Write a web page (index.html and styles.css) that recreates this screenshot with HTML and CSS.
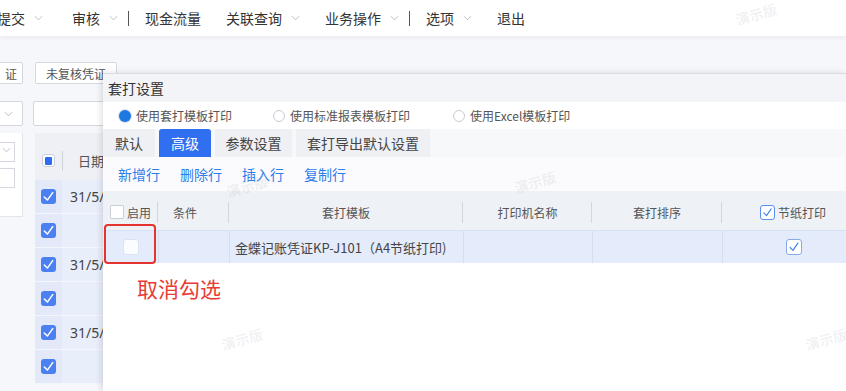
FILE: index.html
```html
<!DOCTYPE html>
<html lang="zh">
<head>
<meta charset="utf-8">
<title>套打设置</title>
<link rel="stylesheet" href="styles.css">
</head>
<body>
<header class="topnav">
  <span class="nav-item first">提交<svg class="chev" viewBox="0 0 10 6"><polyline points="1,1 5,5 9,1"/></svg></span>
  <span class="nav-item">审核<svg class="chev" viewBox="0 0 10 6"><polyline points="1,1 5,5 9,1"/></svg></span>
  <span class="nav-sep"></span>
  <span class="nav-item">现金流量</span>
  <span class="nav-item">关联查询<svg class="chev" viewBox="0 0 10 6"><polyline points="1,1 5,5 9,1"/></svg></span>
  <span class="nav-item">业务操作<svg class="chev" viewBox="0 0 10 6"><polyline points="1,1 5,5 9,1"/></svg></span>
  <span class="nav-sep"></span>
  <span class="nav-item">选项<svg class="chev" viewBox="0 0 10 6"><polyline points="1,1 5,5 9,1"/></svg></span>
  <span class="nav-item">退出</span>
</header>

<main class="page">
  <div class="toolbar">
    <span class="btn btn-cut">证</span>
    <span class="btn">未复核凭证</span>
  </div>
  <div class="filters">
    <span class="select"><svg class="chev" viewBox="0 0 10 6"><polyline points="1,1 5,5 9,1"/></svg></span>
    <span class="input"></span>
  </div>
  <div class="content">
    <aside class="side">
      <span class="mini"><svg class="chev small" viewBox="0 0 10 6"><polyline points="1,1 5,5 9,1"/></svg></span>
      <span class="mini"></span>
    </aside>
    <section class="grid">
      <div class="grid-head">
        <span class="hc-cb"><span class="cb cb-part"></span></span>
        <span class="hc-line"></span>
        <span class="hc-date">日期</span>
      </div>
      <div class="grid-row"><span class="cb-col"><span class="cb cb-on"><svg viewBox="0 0 16 16"><polyline points="3.5,8.5 6.8,11.8 12.5,3.8"/></svg></span></span><span class="date">31/5/2024</span></div>
      <div class="grid-row"><span class="cb-col"><span class="cb cb-on"><svg viewBox="0 0 16 16"><polyline points="3.5,8.5 6.8,11.8 12.5,3.8"/></svg></span></span><span class="date"></span></div>
      <div class="grid-row"><span class="cb-col"><span class="cb cb-on"><svg viewBox="0 0 16 16"><polyline points="3.5,8.5 6.8,11.8 12.5,3.8"/></svg></span></span><span class="date">31/5/2024</span></div>
      <div class="grid-row"><span class="cb-col"><span class="cb cb-on"><svg viewBox="0 0 16 16"><polyline points="3.5,8.5 6.8,11.8 12.5,3.8"/></svg></span></span><span class="date"></span></div>
      <div class="grid-row"><span class="cb-col"><span class="cb cb-on"><svg viewBox="0 0 16 16"><polyline points="3.5,8.5 6.8,11.8 12.5,3.8"/></svg></span></span><span class="date">31/5/2024</span></div>
      <div class="grid-row"><span class="cb-col"><span class="cb cb-on"><svg viewBox="0 0 16 16"><polyline points="3.5,8.5 6.8,11.8 12.5,3.8"/></svg></span></span><span class="date"></span></div>
    </section>
  </div>
</main>

<div class="dialog">
  <div class="dlg-title">套打设置</div>
  <div class="radios">
    <label class="radio r1"><span class="dot on"></span>使用套打模板打印</label>
    <label class="radio r2"><span class="dot"></span>使用标准报表模板打印</label>
    <label class="radio r3"><span class="dot"></span>使用Excel模板打印</label>
  </div>
  <div class="tabs">
    <span class="tab t1">默认</span>
    <span class="tab t2 active">高级</span>
    <span class="tab t3">参数设置</span>
    <span class="tab t4">套打导出默认设置</span>
  </div>
  <div class="actions">
    <span class="act">新增行</span>
    <span class="act">删除行</span>
    <span class="act">插入行</span>
    <span class="act">复制行</span>
  </div>
  <div class="tbl">
    <div class="thead">
      <span class="c c1"><span class="hcb"></span>启用<i class="hsep"></i></span>
      <span class="c c2 left">条件<i class="hsep"></i></span>
      <span class="c c3">套打模板<i class="hsep"></i></span>
      <span class="c c4">打印机名称<i class="hsep"></i></span>
      <span class="c c5">套打排序<i class="hsep"></i></span>
      <span class="c c6"><span class="hcb checked"><svg viewBox="0 0 16 16"><polyline points="3.5,8.5 6.8,11.8 12.5,3.5"/></svg></span>节纸打印</span>
    </div>
    <div class="trow">
      <span class="c c1"><span class="rcb"></span></span>
      <span class="c c2 bl"></span>
      <span class="c c3 left bl">金蝶记账凭证KP-J101（A4节纸打印)</span>
      <span class="c c4 bl"></span>
      <span class="c c5 bl"></span>
      <span class="c c6 bl"><span class="rcb checked"><svg viewBox="0 0 16 16"><polyline points="3.5,8.5 6.8,11.8 12.5,3.5"/></svg></span></span>
    </div>
  </div>
</div>

<div class="annot-box"></div>
<div class="annot-text">取消勾选</div>

<span class="wm w1">演示版</span>
<span class="wm w2">演示版</span>
<span class="wm w3">演示版</span>
<span class="wm w4">演示版</span>
<span class="wm w5">演示版</span>
</body>
</html>
```

FILE: styles.css
```css
* { box-sizing: border-box; }
html, body { margin: 0; padding: 0; }
body {
  width: 846px;
  height: 391px;
  overflow: hidden;
  position: relative;
  font-family: "Noto Sans CJK SC", "Noto Sans", sans-serif;
  color: #333;
  background: #f6f7fa;
}

/* top nav */
.topnav {
  height: 36px;
  background: #fff;
  display: flex;
  align-items: center;
  font-size: 14px;
  color: #333;
  box-shadow: 0 2px 4px rgba(0,0,0,0.05);
  position: relative;
  z-index: 1;
  white-space: nowrap;
}
.nav-item { display: inline-flex; align-items: center; margin-right: 25px; line-height: 20px; }
.nav-item.first { margin-left: -3px; margin-right: 29px; }
.nav-sep { width: 1px; height: 15px; background: #555; margin-left: -15px; margin-right: 16px; flex: none; }
.chev { width: 9px; height: 6px; margin-left: 9px; fill: none; stroke: #b4b8c0; stroke-width: 1; }
.chev.small { margin: 0; }

/* page */
.page { padding-top: 26px; height: 355px; overflow: hidden; }
.toolbar { display: flex; gap: 12px; height: 22px; margin-left: -10px; }
.btn {
  display: inline-flex; align-items: center; height: 22px;
  border: 1px solid #d4d7de; border-radius: 2px; background: #fff;
  font-size: 12px; color: #555; padding: 0 10px;
}
.btn-cut { width: 33px; padding: 0 0 0 14px; }
.filters { display: flex; gap: 10px; height: 25px; margin-top: 17px; margin-left: -10px; }
.select {
  width: 33px; height: 25px; background: #fff; border: 1px solid #d4d7de; border-radius: 2px;
  display: inline-flex; align-items: center; justify-content: flex-end; padding-right: 9px;
}
.select .chev { margin: 0; }
.input { width: 160px; height: 25px; background: #fff; border: 1px solid #d4d7de; border-radius: 2px; }

.content { display: flex; margin-top: 7px; }
.side {
  width: 23px; height: 84px; background: #fff; border-right: 1px solid #e3e5ea;
  border-bottom: 1px solid #e3e5ea;
  display: flex; flex-direction: column; gap: 6px; padding-top: 9px;
  align-self: flex-start; flex: none;
}
.mini {
  width: 15px; height: 20px; background: #fff; border: 1px solid #d4d7de; border-left: none;
  display: flex; align-items: flex-start; justify-content: flex-end; padding: 4px 3px 0 0;
}
.grid { margin-left: 12px; width: 160px; flex: none; }
.grid-head {
  height: 47px; background: #eef0f5;
  display: grid; grid-template-columns: 27px 1px 132px; align-items: center;
  padding-top: 8px; font-size: 13px; color: #555;
}
.hc-cb { display: flex; justify-content: center; }
.hc-line { height: 20px; background: #cfd3db; }
.hc-date { padding-left: 15px; white-space: nowrap; line-height: 20px; }
.cb-col { width: 27px; display: flex; justify-content: center; flex: none; }
.grid-row {
  height: 34px; display: flex; align-items: center;
  background: #e9eefb; border-bottom: 1px solid #f4f6fd;
}
.grid-row .cb-col { height: 100%; align-items: center; background: #e3e9f8; }
.date { margin-left: 8px; font-size: 14px; color: #444; font-family: "Noto Sans", sans-serif; white-space: nowrap; }
.cb {
  width: 15px; height: 15px; border-radius: 3px; display: inline-flex;
  align-items: center; justify-content: center; flex: none;
}
.cb-part { width: 13px; height: 13px; border: 1px solid #c9cfdc; background: #fff; padding: 2px; }
.cb-part::after { content: ""; width: 8px; height: 8px; background: #2d6bf0; border-radius: 1px; }
.cb-on { background: #4b80f3; }
.cb-on svg { width: 15px; height: 15px; fill: none; stroke: #fff; stroke-width: 1.6; stroke-linecap: round; stroke-linejoin: round; }

/* dialog */
.dialog {
  position: absolute; left: 103px; top: 73px; right: 0; bottom: 0;
  background: #fff; border-top: 1px solid #d8dbe2;
  box-shadow: -2px 0 6px rgba(0,0,0,0.12);
  z-index: 2;
  display: flex; flex-direction: column;
}
.dlg-title {
  height: 28px; background: #f2f4f8; font-size: 14px; color: #333;
  display: flex; align-items: center; padding-left: 5px;
}
.radios { height: 27px; background: #fff; display: flex; align-items: center; padding-left: 16px; font-size: 12px; color: #555; }
.radio { display: inline-flex; align-items: center; }
.r1 { width: 154px; }
.r2 { width: 180px; }
.dot {
  width: 12px; height: 12px; border-radius: 50%; border: 1px solid #c6cad3; background: #fff;
  margin-right: 5px; flex: none;
}
.dot.on { border: none; background: #1f78e0; box-shadow: 0 0 0 1px #d5e3f7; }
.tabs { height: 28px; background: #f7f8fa; display: flex; gap: 4px; }
.tab {
  display: flex; align-items: center; justify-content: center; height: 28px;
  background: #eef0f4; font-size: 14px; color: #444;
}
.t1 { width: 52px; }
.t2 { width: 52px; }
.t3 { width: 77px; }
.t4 { width: 134px; }
.tab.active { background: #2f6ff0; color: #fff; border-radius: 3px 3px 0 0; }
.actions {
  height: 34px; background: #fbfbfd; display: flex; align-items: center;
  gap: 20px; padding-left: 15px; font-size: 14px; color: #2f7de9;
}
.tbl { font-size: 12px; color: #555; }
.thead { height: 39px; background: #eef1f6; display: flex; }
.trow { height: 33px; background: #e4ebfb; display: flex; border-top: 1px solid #d6e0f6; font-size: 13px; color: #444; }
.c { position: relative; display: flex; align-items: center; justify-content: center; height: 100%; flex: none; }
.c.left { justify-content: flex-start; }
.c1 { width: 55px; }
.c2 { width: 71px; }
.c2.left { padding-left: 15px; }
.c3 { width: 234px; }
.c3.left { padding-left: 5px; }
.c4 { width: 129px; }
.c5 { width: 130px; }
.c6 { flex: 1; padding-left: 18px; }
.thead .c { padding-top: 3px; }
.thead .c1 { justify-content: flex-start; padding-left: 7px; }
.hsep { position: absolute; right: 0; top: 11px; width: 1px; height: 21px; background: #d2d6de; }
.bl { border-left: 1px solid #d5ddee; }
.hcb {
  width: 14px; height: 14px; border: 1px solid #c8cdd6; background: #fff; border-radius: 2px;
  margin-right: 3px; display: inline-flex;
}
.hcb.checked { border-color: #5a8ff0; width: 15px; height: 15px; border-radius: 3px; }
.hcb svg, .rcb svg { width: 100%; height: 100%; fill: none; stroke: #3f7ff0; stroke-width: 1.3; stroke-linecap: round; stroke-linejoin: round; }
.rcb {
  width: 16px; height: 16px; border: 1px solid #dbe2f1; background: #fbfcff; border-radius: 3px; display: inline-flex;
}
.rcb.checked { border-color: #86a9ec; background: #fff; }

/* annotation */
.annot-box {
  position: absolute; left: 104px; top: 224px; width: 52px; height: 40px;
  border: 2.5px solid #e5342e; border-radius: 4px; z-index: 3;
}
.annot-text {
  position: absolute; left: 137px; top: 275px; font-size: 21px; line-height: 27px;
  color: #e83b33; z-index: 3;
}

/* watermarks */
.wm {
  position: absolute; z-index: 4; font-size: 14px; color: rgba(140,145,160,0.13);
  transform: rotate(-16deg); pointer-events: none; font-weight: bold; white-space: nowrap;
}
.w1 { left: 514px; top: 172px; }
.w2 { left: 221px; top: 329px; }
.w3 { left: 805px; top: 329px; }
.w4 { left: 735px; top: 4px; }
.w5 { left: 226px; top: 176px; }
```
